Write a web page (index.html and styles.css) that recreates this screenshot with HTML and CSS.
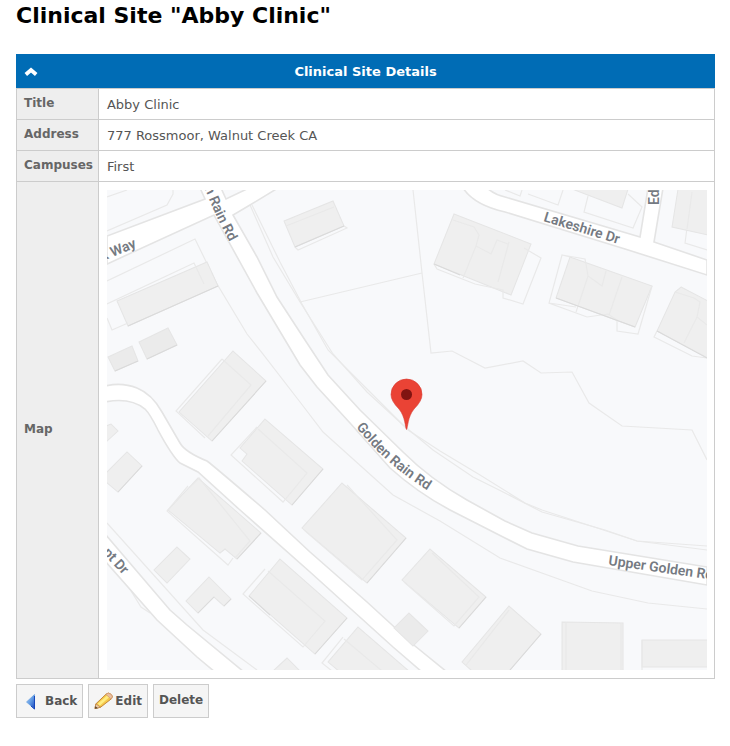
FILE: index.html
```html
<!DOCTYPE html>
<html lang="en">
<head>
<meta charset="utf-8">
<title>Clinical Site</title>
<link rel="stylesheet" href="styles.css">
</head>
<body>
<main class="page">
  <h1 class="page-title">Clinical Site "Abby Clinic"</h1>
  <table class="details">
    <thead>
      <tr>
        <th colspan="2" class="details-head">
          <div class="head-bar">
            <button type="button" class="collapse" aria-label="Collapse">
              <svg width="14" height="10" viewBox="0 0 14 10"><path d="M1.800 7.500L7 3l5.200 4.500" fill="none" stroke="#fff" stroke-width="3.800"/></svg>
            </button>
            <span>Clinical Site Details</span>
          </div>
        </th>
      </tr>
    </thead>
    <tbody>
      <tr><th scope="row">Title</th><td>Abby Clinic</td></tr>
      <tr><th scope="row">Address</th><td>777 Rossmoor, Walnut Creek CA</td></tr>
      <tr><th scope="row">Campuses</th><td>First</td></tr>
      <tr class="map-row">
        <th scope="row">Map</th>
        <td>
          <svg class="map" viewBox="107 190 600 480" role="img" aria-label="Map">
            <rect x="107" y="190" width="600" height="480" fill="#f8f9fb"/>
            <g class="lot">
              <path d="M107 281L195 239L217 284L247 334L263 354L300 402L323 432L393 495L440 521L500 558L592 591L648 603L707 609"/>
              <path d="M250 205L273 257L300 302L333 354L367 392L403 425L433 450L473 477L505 493L542 512L605 530L637 541L707 550"/>
              <path d="M252 205L280 262L302 304L328 350L365 387L408 430L440 451L480 475L525 503L542 510L637 541L707 546"/>
              <path d="M300 302L422 273M413 190L422 273L431 353L452 351L485 368L523 361L541 373L572 372L589 403L622 426L692 430L707 460"/>
              <path d="M107 523L203 630L257 670M107 197L127 190M107 231L167 205L173 194V190M123 578L141 607L150 613"/>
              <path d="M505 190L520 196L522 190M528 194L558 205L563 190M588 196L584 212L633 228L642 207L628 194M691 192L688 220L685 243L707 250"/>
            </g>
            <g class="road">
              <path d="M200 188L205 199L107 236V264L214 215L257 293L300 365L317 387L350 423L390 468Q418 493 450 510L505 538L527 549L573 562L707 585V567L578 546L532 533L505 521L467 500Q430 479 403 452L360 410L328 375L303 337L277 297L257 257L233 215L250 205L278 188H249L226 199L221 188Z"/>
              <path d="M463 188Q474 205 505 212L625 249L707 275V260L654 242L663 188H648L640 237L505 197Q495 195 487 188Z"/>
              <path d="M105 386Q122 382 137 388Q152 394 162 412L180 443Q185 452 207 461Q215 467 265 510L310 552L367 602L415 646L447 672H422L393 647L310 572L240 510L198 472L180 463Q172 456 158 430Q150 414 145 409Q130 397 105 402Z"/>
              <path d="M105 534L170 610L187 625L244 672H215L197 657L157 620L105 561Z"/>
            </g>
            <g class="building">
              <path d="M117 301L207 262L218 286L128 326Z"/>
              <path class="dark" d="M139 342L168 328L177 345L147 359ZM108 357L132 346L138 361L115 371Z"/>
              <path d="M284 221L333 201L344 226L295 247Z"/>
              <path d="M454 214L531 244L511 295L434 264Z"/>
              <path d="M570 257L652 286L635 327L556 298Z"/>
              <path d="M681 287L708 301V358L657 331L675 292Z"/>
              <path d="M572 189H628L622 208Z"/>
              <path d="M678 189H708V235L672 227Z"/>
              <path d="M233 351L266 381L212 441L179 412Z"/>
              <path d="M265 419L323 469L292 505L242 461L247 454L240 448Z"/>
              <path d="M198 478L261 533L237 559L225 549L220 553L168 510Z"/>
              <path d="M106 473L127 452L142 466L118 492L106 482ZM106 426L111 424L118 431L106 442Z"/>
              <path d="M177 547L190 559L167 583L154 570ZM209 577L231 599L224 606L214 597L198 613L186 601Z"/>
              <path d="M342 483L406 538L367 583L302 528Z"/>
              <path d="M430 549L486 597L459 628L402 580Z"/>
              <path class="dark" d="M409 613L428 631L413 646L394 628Z"/>
              <path d="M280 559L347 618L315 654L249 596Z"/>
              <path d="M358 627L410 672H340L328 662ZM273 671L287 658L300 671Z"/>
              <path d="M509 606L541 634L509 671H472L462 662Z"/>
              <path d="M562 622L623 623V671H562ZM642 640H708V667H642Z"/>
            </g>
            <g class="lot">
              <path d="M107 304L194 263L204 284M107 318L112 330L128 323M286 226L334 207M295 247L298 250L347 228L344 226"/>
              <path d="M453 220L474 227L479 235L476 246L491 254L497 240L508 244M476 246L463 278M434 264L437 269L475 284L503 290V298L523 304L541 258L524 248M509 242L498 282"/>
              <path d="M570 257L562 255L549 303L587 317L608 314L617 320V331L638 334L652 286M562 255L585 259L588 276L602 286L606 271M588 276L576 312M622 277L609 315M549 303L576 307"/>
              <path d="M657 331L654 337L692 356L707 358M675 292L694 298L700 302L697 317L707 325M697 317L684 343"/>
              <path d="M222 359L176 411L205 438M222 359L251 385L208 436M257 427L231 455L283 502L307 473L258 429M188 486L167 511L228 565L233 558M190 487L199 478L250 541L235 558"/>
              <path d="M347 485L397 540L362 580L304 530M432 553L479 597L454 626L404 582M265 569L243 594L303 647L325 621L268 571M343 637L322 663L332 671M344 639L382 671M509 610L466 665M566 622V670M621 623V670M642 640V670M692 192L687 229"/>
            </g>
            <path class="shade" d="M128 326L218 286M147 359L177 345M115 371L138 361M295 247L344 226M212 441L266 381M292 505L323 469M237 559L261 533M118 492L142 466M198 613L214 597M224 606L231 599M367 583L406 538M459 628L486 597M315 654L347 618M510 670L541 634M434 264L460 275M657 331L707 358M249 596L270 615M556 298L635 327"/>
            <defs>
              <path id="rain-curve" d="M356 427Q386 466 438 497"/>
              <path id="rain-north" d="M177 134L207 194Q216 218 234 250"/>
            </defs>
            <g class="street">
              <text text-anchor="end" transform="translate(137 247) rotate(-22)">k Way</text>
              <text text-anchor="end"><textPath href="#rain-north" startOffset="93%">n Rain Rd</textPath></text>
              <text><textPath href="#rain-curve">Golden Rain Rd</textPath></text>
              <text transform="translate(543 221) rotate(17)">Lakeshire Dr</text>
              <text transform="translate(659 205) rotate(-90)">Ed</text>
              <text transform="translate(608 565) rotate(8)">Upper Golden Rd</text>
              <text text-anchor="end" transform="translate(123 575) rotate(47)">pt Dr</text>
            </g>
            <path d="M406.500 429.500C405 427 405.500 417 399 409Q391 401 391 394.500A15.500 15.500 0 0 1 422 394.500Q422 401 414 409C407.500 417 408 427 406.500 429.500Z" fill="#ea4335" stroke="#d93b30" stroke-width=".6"/>
            <circle cx="406.500" cy="394.500" r="5.500" fill="#811411"/>
          </svg>
        </td>
      </tr>
    </tbody>
  </table>
  <div class="actions">
    <button type="button" class="action">
      <svg width="21" height="18" viewBox="0 0 21 18"><defs><linearGradient id="arrow" x2="1" y2="1"><stop stop-color="#a6cef8"/><stop offset=".5" stop-color="#639ce4"/><stop offset="1" stop-color="#1745be"/></linearGradient></defs><path d="M12.500 2.500V17L4.500 10Z" fill="url(#arrow)" stroke="#659de0" stroke-width=".7"/><path d="M12.500 4V17L9 14" fill="none" stroke="#1747ba"/></svg>
      <span>Back</span>
    </button>
    <button type="button" class="action">
      <svg width="19" height="18" viewBox="0 0 20 18"><path d="M1 17L2 12L13 1.500Q15-.5 18 2Q20.500 4 18.500 6.500L7 15.500Z" fill="#f5c94c" stroke="#c28536"/><path d="M4 12L14 3L16 5L6 14Z" fill="#ffed83"/><path d="M12.500 2Q15-.5 18 2Q20.500 4 18 7Z" fill="#eac0a0" stroke="#cf9371" stroke-width=".7"/><path d="M2 12L7 15.500L1 17Z" fill="#ebcba7" stroke="#b87a3d" stroke-width=".7"/><path d="M1 17L1.500 14.500L4 16.500Z" fill="#4c3c30"/></svg>
      <span>Edit</span>
    </button>
    <button type="button" class="action action-plain">Delete</button>
  </div>
</main>
</body>
</html>
```
FILE: styles.css
```css
body {
  margin: 0;
  background: #fff;
  color: #555;
  font-family: Verdana, "DejaVu Sans", sans-serif;
  font-size: 13px;
}

.page {
  padding: 0 15px 24px 16px;
}

.page-title {
  margin: 0 0 24px;
  padding-top: 1px;
  color: #000;
  font-size: 22px;
  line-height: 29px;
}

.details {
  width: 100%;
  border-collapse: collapse;
}

.details th,
.details td {
  border: 1px solid #ccc;
  padding: 7px;
  line-height: 17px;
  text-align: left;
}

.details tbody th {
  width: 1px;
  padding: 6px 5px 7px 7px;
  background: #eee;
  color: #666;
  font-size: 12px;
  white-space: nowrap;
}

.details tbody td {
  padding: 7px 7px 6px 8px;
}

.details .map-row td {
  padding: 8px 7px 8px 8px;
}

.details .details-head {
  padding: 0 7px;
  border-color: #006cb5;
  border-bottom-color: #ccc;
  background: #006cb5;
  color: #fff;
}

.head-bar {
  display: grid;
  grid-template-columns: 1fr auto 1fr;
  align-items: center;
  height: 33px;
}

.collapse {
  display: flex;
  justify-self: start;
  padding: 1px 0 0;
  border: 0;
  background: none;
}

.map {
  display: block;
  width: 100%;
  height: auto;
}

.lot {
  fill: none;
  stroke: #e9e9e9;
  stroke-width: 1.2;
}

.road {
  fill: #fff;
  stroke: #e4e4e4;
  stroke-width: 1.6;
}

.building {
  fill: #efefef;
  stroke: #e5e5e5;
}

.dark {
  fill: #ebebeb;
}

.shade {
  fill: none;
  stroke: #dadada;
}

.street {
  fill: #757a82;
  stroke: #fff;
  stroke-width: 1;
  paint-order: stroke;
  font-family: Roboto, sans-serif;
  font-size: 14px;
  font-weight: 600;
}

.actions {
  display: flex;
  gap: 5px;
  margin-top: 5px;
}

.action {
  display: flex;
  align-items: center;
  gap: 2px;
  height: 34px;
  padding: 0 5px;
  border: 1px solid #ccc;
  background: #f5f5f5;
  color: #555;
  font-family: inherit;
  font-size: 12px;
  font-weight: bold;
}

.action-plain {
  padding-bottom: 2px;
}
```
